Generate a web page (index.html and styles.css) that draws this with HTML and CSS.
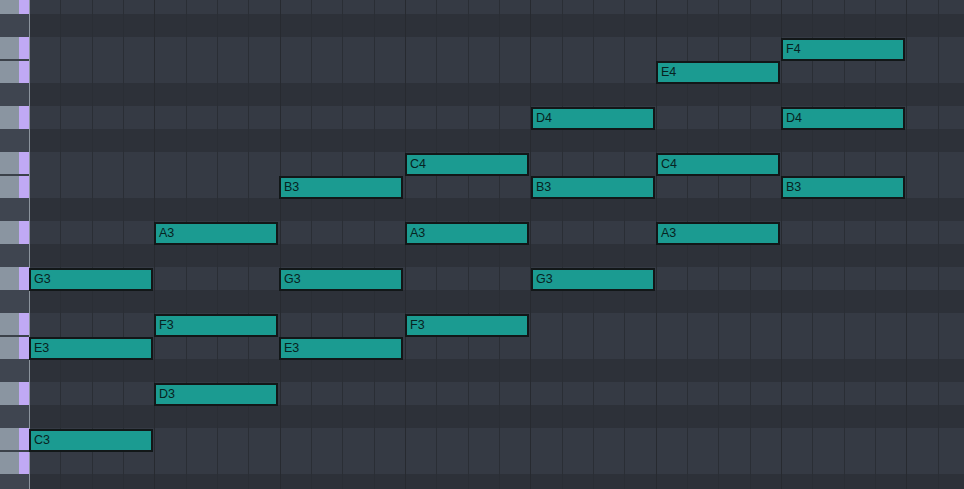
FILE: index.html
```html
<!DOCTYPE html>
<html>
<head>
<meta charset="utf-8">
<link rel="stylesheet" href="styles.css">
</head>
<body>
<div class="roll">
  <div class="row"><div class="key white"></div><div class="lane light"></div></div>
  <div class="row"><div class="key black"></div><div class="lane dark"></div></div>
  <div class="row"><div class="key white sep-below"></div><div class="lane light"><div class="note b6">F4</div></div></div>
  <div class="row"><div class="key white sep-above"></div><div class="lane light"><div class="note b5">E4</div></div></div>
  <div class="row"><div class="key black"></div><div class="lane dark"></div></div>
  <div class="row"><div class="key white"></div><div class="lane light"><div class="note b4">D4</div><div class="note b6">D4</div></div></div>
  <div class="row"><div class="key black"></div><div class="lane dark"></div></div>
  <div class="row"><div class="key white sep-below"></div><div class="lane light"><div class="note b3">C4</div><div class="note b5">C4</div></div></div>
  <div class="row"><div class="key white sep-above"></div><div class="lane light"><div class="note b2">B3</div><div class="note b4">B3</div><div class="note b6">B3</div></div></div>
  <div class="row"><div class="key black"></div><div class="lane dark"></div></div>
  <div class="row"><div class="key white"></div><div class="lane light"><div class="note b1">A3</div><div class="note b3">A3</div><div class="note b5">A3</div></div></div>
  <div class="row"><div class="key black"></div><div class="lane dark"></div></div>
  <div class="row"><div class="key white"></div><div class="lane light"><div class="note b0">G3</div><div class="note b2">G3</div><div class="note b4">G3</div></div></div>
  <div class="row"><div class="key black"></div><div class="lane dark"></div></div>
  <div class="row"><div class="key white sep-below"></div><div class="lane light"><div class="note b1">F3</div><div class="note b3">F3</div></div></div>
  <div class="row"><div class="key white sep-above"></div><div class="lane light"><div class="note b0">E3</div><div class="note b2">E3</div></div></div>
  <div class="row"><div class="key black"></div><div class="lane dark"></div></div>
  <div class="row"><div class="key white"></div><div class="lane light"><div class="note b1">D3</div></div></div>
  <div class="row"><div class="key black"></div><div class="lane dark"></div></div>
  <div class="row"><div class="key white sep-below"></div><div class="lane light"><div class="note b0">C3</div></div></div>
  <div class="row"><div class="key white sep-above"></div><div class="lane light"></div></div>
  <div class="row"><div class="key black"></div><div class="lane dark"></div></div>
</div>
</body>
</html>
```
FILE: styles.css
```css
html, body {
  margin: 0;
  padding: 0;
  width: 964px;
  height: 489px;
  overflow: hidden;
  background: #2d3139;
  font-family: "Liberation Sans", Arial, sans-serif;
}

.roll {
  display: flex;
  flex-direction: column;
  margin-top: -9px;
}

.row {
  display: flex;
  height: 23px;
  flex: none;
}

.key {
  width: 30px;
  box-sizing: border-box;
  border-right: 1px solid #8b939d;
  flex: none;
}

.key.white {
  background: linear-gradient(to right, #8a95a1 0 19px, #c0a9f4 19px 29px);
}

.key.black {
  background: #3f4550;
}

.key.sep-below {
  box-shadow: inset 0 -1px 0 #3b4149;
}

.key.sep-above {
  box-shadow: inset 0 1px 0 #3b4149;
}

.lane {
  flex: 1;
  position: relative;
  background-image:
    repeating-linear-gradient(90deg, transparent 0 124.333px, #272a30 124.333px 125.333px),
    repeating-linear-gradient(90deg, transparent 0 30.333px, #2a2e35 30.333px 31.333px);
}

.lane.light {
  background-color: #353a44;
}

.lane.dark {
  background-color: #2d3139;
}

.note {
  position: absolute;
  top: 1px;
  height: 23px;
  width: 124px;
  box-sizing: border-box;
  border: 2px solid #121718;
  background: #1b9b91;
  color: #072321;
  font-size: 12.5px;
  line-height: 19px;
  padding-left: 3px;
  z-index: 1;
}

.b0 { left: -1px; }
.b1 { left: 124px; }
.b2 { left: 249px; }
.b3 { left: 375px; }
.b4 { left: 501px; }
.b5 { left: 626px; }
.b6 { left: 751px; }
```
